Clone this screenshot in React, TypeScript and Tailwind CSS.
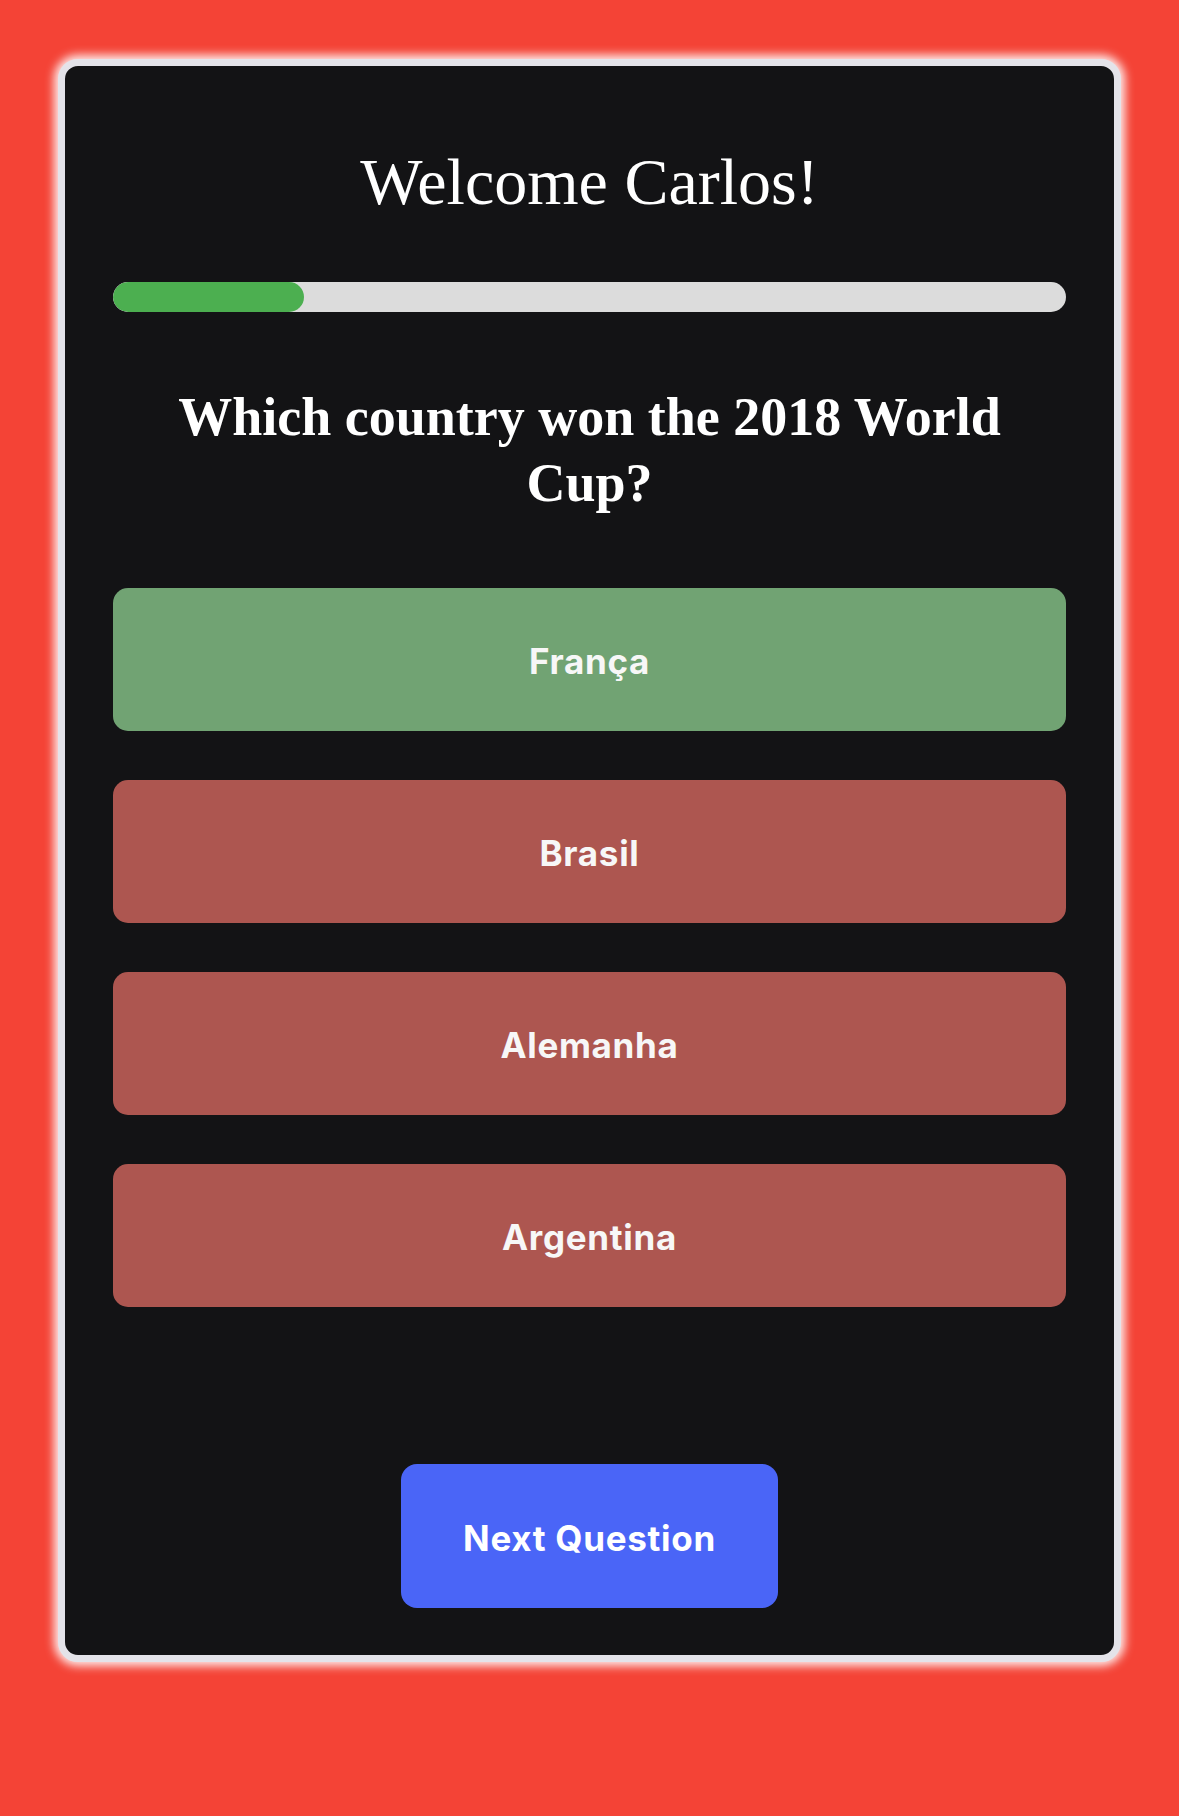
const ANSWERS = [
  { label: "França", correct: true },
  { label: "Brasil", correct: false },
  { label: "Alemanha", correct: false },
  { label: "Argentina", correct: false },
];

export default function App() {
  const progress = 20;

  return (
    <div className="min-h-screen bg-[#f44336] px-[58px] pt-[59px] pb-[150px]">
      <div className="rounded-[20px] border-[7px] border-[#e4e3e9] bg-[#131315] shadow-[0_0_10px_4px_rgba(255,255,255,0.9)] px-[48px] pt-[76px] pb-[47px]">
        {/* Greeting */}
        <h1 className="text-center text-white text-[66px] leading-[80px] font-['Liberation_Serif',serif] font-normal">
          Welcome Carlos!
        </h1>

        {/* Progress */}
        <div className="mt-[60px] h-[30px] w-full rounded-full bg-[#dcdcdc] overflow-hidden">
          <div
            className="h-full rounded-full bg-[#4caf50]"
            style={{ width: `${progress}%` }}
          />
        </div>

        {/* Question */}
        <h2 className="mt-[72px] px-[8px] text-center text-white text-[54px] leading-[66px] font-bold font-['Liberation_Serif',serif]">
          Which country won the 2018 World Cup?
        </h2>

        {/* Answers */}
        <div className="mt-[72px] flex flex-col gap-[49px]">
          {ANSWERS.map((a) => (
            <button
              key={a.label}
              className={
                "h-[143px] w-full rounded-[15px] pt-[4px] text-[35px] tracking-[0.02em] font-bold text-[#f7f7f7] font-['Inter',sans-serif] " +
                (a.correct ? "bg-[#71a373]" : "bg-[#ad5650]")
              }
            >
              {a.label}
            </button>
          ))}
        </div>

        {/* Next */}
        <div className="mt-[157px] flex justify-center">
          <button className="h-[144px] w-[377px] rounded-[16px] pt-[4px] bg-[#4a65f7] text-white text-[35px] tracking-[0.02em] font-bold font-['Inter',sans-serif]">
            Next Question
          </button>
        </div>
      </div>
    </div>
  );
}
